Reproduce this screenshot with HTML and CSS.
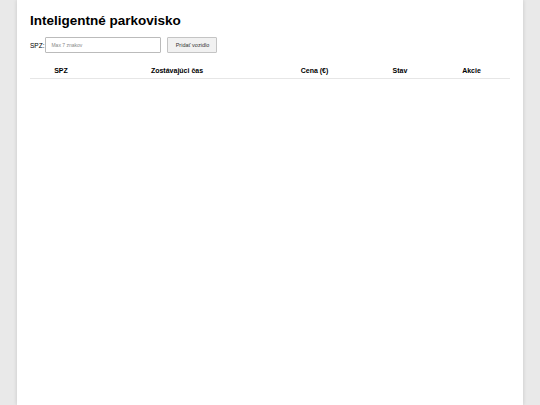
FILE: index.html
```html
<!DOCTYPE html>
<html lang="sk">
<head>
<meta charset="utf-8">
<title>Inteligentné parkovisko</title>
<link rel="stylesheet" href="styles.css">
</head>
<body>
<div class="container">
  <h1 class="title">Inteligentné parkovisko</h1>
  <div class="form-row">
    <label class="label" for="spz">SPZ:</label>
    <input class="input" id="spz" type="text" maxlength="7" placeholder="Max 7 znakov">
    <button class="btn" type="button">Pridať vozidlo</button>
  </div>
  <table class="table">
    <thead>
      <tr>
        <th class="c1">SPZ</th>
        <th class="c2">Zostávajúci čas</th>
        <th class="c3">Cena (€)</th>
        <th class="c4">Stav</th>
        <th class="c5">Akcie</th>
      </tr>
    </thead>
    <tbody></tbody>
  </table>
</div>
</body>
</html>
```
FILE: styles.css
```css
html, body {
  margin: 0;
  padding: 0;
  height: 100%;
}
body {
  background: #e9e9e9;
  font-family: "Liberation Sans", Arial, sans-serif;
  color: #000;
}
.container {
  box-sizing: border-box;
  width: 506px;
  min-height: 100%;
  margin: 0 auto;
  background: #fff;
  padding: 12px 13px;
  box-shadow: 0 0 4px rgba(0, 0, 0, 0.15);
}
.title {
  margin: 0;
  font-size: 13.5px;
  font-weight: bold;
  line-height: 16px;
  padding-top: 1px;
}
.form-row {
  display: flex;
  align-items: center;
  margin-top: 8px;
}
.label {
  font-size: 6.5px;
  margin-right: 1px;
}
.input {
  box-sizing: border-box;
  width: 116px;
  height: 16px;
  border: 1px solid #bbb;
  border-radius: 1px;
  padding: 0 5px;
  font-family: inherit;
  font-size: 5px;
  color: #333;
  outline: none;
}
.input::placeholder {
  color: #888;
}
.btn {
  box-sizing: border-box;
  width: 50px;
  height: 16px;
  margin-left: 6px;
  border: 1px solid #c4c4c4;
  border-radius: 1px;
  background: #f1f1f1;
  font-family: inherit;
  font-size: 5.5px;
  color: #333;
  padding: 0;
}
.table {
  width: 480px;
  margin-top: 10px;
  border-collapse: collapse;
  table-layout: fixed;
}
.table th {
  font-size: 7px;
  font-weight: bold;
  text-align: center;
  padding: 4px 0;
  border-bottom: 1px solid #e6e6e6;
}
.c1 { width: 62px; }
.c2 { width: 170px; }
.c3 { width: 105px; }
.c4 { width: 66px; }
.c5 { width: 77px; }
```
